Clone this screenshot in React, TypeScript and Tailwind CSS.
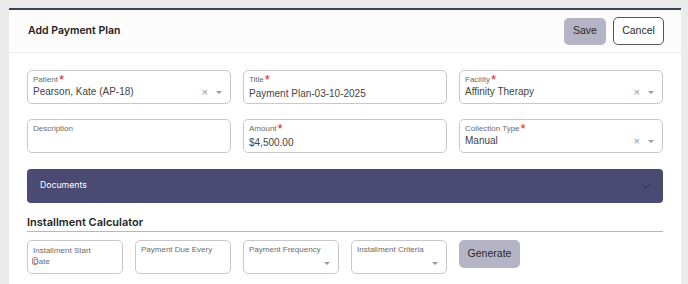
import React from 'react';

const sans = { fontFamily: '"Liberation Sans", Arial, sans-serif' };
const head = { fontFamily: 'Inter, "Noto Sans", sans-serif' };

function Label({ text, required }: { text: string; required?: boolean }) {
  return (
    <div className="flex items-start text-[8px] leading-[10px] text-[#6b6b6b]">
      <span>{text}</span>
      {required && <span className="ml-[1px] text-[13px] leading-[10px] text-[#d22]">*</span>}
    </div>
  );
}

function SelectField({ label, value, required }: { label: string; value: string; required?: boolean }) {
  return (
    <div className="flex h-[34px] flex-col rounded-[5px] border border-[#c9c9c9] bg-white px-[5px] pt-[4px]">
      <Label text={label} required={required} />
      <div className="mt-[1px] flex items-center">
        <span className="flex-1 text-[10px] leading-[12px] text-[#444]">{value}</span>
        <span className="mr-[8px] text-[11px] leading-[12px] text-[#999]">×</span>
        <span className="mr-[3px] h-0 w-0 border-x-[3px] border-t-[3px] border-x-transparent border-t-[#999]" />
      </div>
    </div>
  );
}

function TextField({ label, value, required }: { label: string; value?: string; required?: boolean }) {
  return (
    <div className="flex h-[34px] flex-col rounded-[5px] border border-[#c9c9c9] bg-white px-[5px] pt-[4px]">
      <Label text={label} required={required} />
      {value && <div className="mt-[3px] text-[10px] leading-[12px] text-[#444]">{value}</div>}
    </div>
  );
}

function SmallSelect({ label }: { label: string }) {
  return (
    <div className="flex h-[34px] flex-col rounded-[5px] border border-[#c9c9c9] bg-white px-[5px] pt-[4px]">
      <div className="text-[8px] leading-[10px] text-[#6b6b6b]">{label}</div>
      <div className="mt-auto mb-[8px] flex justify-end">
        <span className="mr-[3px] h-0 w-0 border-x-[3px] border-t-[3px] border-x-transparent border-t-[#999]" />
      </div>
    </div>
  );
}

export default function App() {
  return (
    <div className="flex h-[284px] w-[688px] overflow-hidden bg-[#ebebeb]" style={sans}>
      <div className="ml-[9px] mt-[8px] w-[672px] border-t-[2px] border-[#3a4356] bg-white">
        <div className="flex h-[43px] items-center border-b border-[#f0f0f0] bg-[#fdfcfd] pl-[19px] pr-[17px]">
          <h1 className="flex-1 text-[10.5px] font-semibold text-[#222]" style={head}>
            Add Payment Plan
          </h1>
          <button className="h-[27px] w-[42px] rounded-[5px] bg-[#b4b4c4] text-[10.5px] text-[#2a2a2a]">Save</button>
          <button className="ml-[7px] h-[28px] w-[51px] rounded-[5px] border border-[#555] bg-white text-[10.5px] text-[#2a2a2a]">
            Cancel
          </button>
        </div>

        <div className="px-[18px] pt-[17px]">
          <div className="grid grid-cols-3 gap-x-[12px] gap-y-[15px]">
            <SelectField label="Patient" value="Pearson, Kate (AP-18)" required />
            <TextField label="Title" value="Payment Plan-03-10-2025" required />
            <SelectField label="Facility" value="Affinity Therapy" required />
            <TextField label="Description" />
            <TextField label="Amount" value="$4,500.00" required />
            <SelectField label="Collection Type" value="Manual" required />
          </div>

          <div className="mt-[16px] flex h-[34px] items-center rounded-[4px] bg-[#4a4a72] pl-[13px] pr-[12px]">
            <span className="flex-1 text-[8.7px] text-white" style={head}>
              Documents
            </span>
            <svg width="10" height="6" viewBox="0 0 10 6" fill="none" stroke="#2e2e50" strokeWidth="1">
              <path d="M1 1l4 4 4-4" />
            </svg>
          </div>

          <div
            className="mt-[12px] border-b border-[#8ec3ea] pb-[1px] text-[11px] font-semibold leading-[15px] text-[#1f1f1f]"
            style={head}
          >
            Installment Calculator
          </div>

          <div className="mt-[8px] flex items-start gap-x-[12px]">
            <div className="h-[34px] w-[96px] rounded-[5px] border border-[#c9c9c9] bg-white px-[5px] pt-[4px] text-[8px] leading-[11px] text-[#6b6b6b]">
              <div>Installment Start</div>
              <div className="relative">
                <span className="absolute left-[-1px] top-[1px] h-[8px] w-[6px] rounded-[2px] border border-[#e27a7a]" />
                Date
              </div>
            </div>
            <div className="h-[34px] w-[96px] rounded-[5px] border border-[#c9c9c9] bg-white px-[5px] pt-[4px] text-[8px] leading-[10px] text-[#6b6b6b]">
              Payment Due Every
            </div>
            <div className="w-[96px]">
              <SmallSelect label="Payment Frequency" />
            </div>
            <div className="w-[96px]">
              <SmallSelect label="Installment Criteria" />
            </div>
            <button className="h-[28px] w-[61px] rounded-[5px] bg-[#b4b4c4] text-[10.5px] text-[#2a2a2a]">Generate</button>
          </div>
        </div>
      </div>
    </div>
  );
}
